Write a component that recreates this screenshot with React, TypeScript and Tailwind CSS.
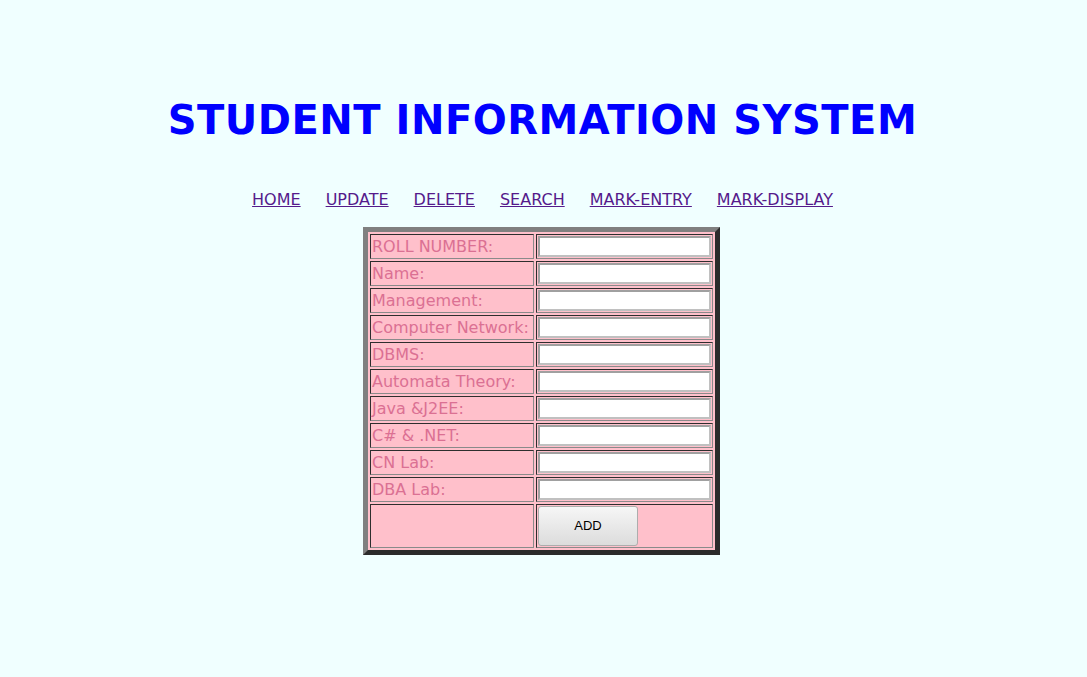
import React from "react";

const labels = [
  "ROLL NUMBER:",
  "Name:",
  "Management:",
  "Computer Network:",
  "DBMS:",
  "Automata Theory:",
  "Java &J2EE:",
  "C# & .NET:",
  "CN Lab:",
  "DBA Lab:",
];

const links = ["HOME", "UPDATE", "DELETE", "SEARCH", "MARK-ENTRY", "MARK-DISPLAY"];

const cell =
  "border border-solid border-t-[#2e2e2e] border-l-[#2e2e2e] border-b-[#8a8a8a] border-r-[#8a8a8a] p-px";

export default function App() {
  return (
    <div
      className="min-h-screen bg-[#f0ffff] pt-[96px]"
      style={{ fontFamily: '"DejaVu Sans", Verdana, sans-serif' }}
    >
      <h1 className="text-center text-[40px] leading-[48px] font-bold tracking-[0.5px] text-[#0000ff] pr-[2px]">
        STUDENT INFORMATION SYSTEM
      </h1>
      <nav className="mt-[46px] flex justify-center gap-[25px] text-[16px] leading-[20px] pr-[2px]">
        {links.map((l) => (
          <a key={l} href="#" className="text-[#551a8b] underline">
            {l}
          </a>
        ))}
      </nav>
      <div className="mt-[17px] flex justify-center pr-[4px]">
        <table className="border-separate border-spacing-[2px] bg-[#ffc0cb] border-[5px] border-solid border-t-[#808080] border-l-[#808080] border-b-[#2b2b2b] border-r-[#2b2b2b]">
          <tbody>
            {labels.map((l) => (
              <tr key={l}>
                <td className={`${cell} w-[164px] text-[16px] leading-[21px] text-[#db7093] whitespace-nowrap`}>
                  {l}
                </td>
                <td className={`${cell} w-[177px]`}>
                  <input
                    type="text"
                    className="block w-[173px] h-[21px] bg-white border-2 border-solid border-t-[#a0a0a0] border-l-[#a0a0a0] border-b-[#c0c0c0] border-r-[#c0c0c0] outline-none"
                  />
                </td>
              </tr>
            ))}
            <tr>
              <td className={`${cell} h-[44px]`}></td>
              <td className={`${cell}`}>
                <button
                  type="button"
                  className="block w-[100px] h-[40px] rounded-[3px] border border-solid border-[#adadad] bg-gradient-to-b from-[#f6f6f6] to-[#dcdcdc] text-[13px] text-black"
                  style={{ fontFamily: '"Liberation Sans", Arial, sans-serif' }}
                >
                  ADD
                </button>
              </td>
            </tr>
          </tbody>
        </table>
      </div>
    </div>
  );
}
